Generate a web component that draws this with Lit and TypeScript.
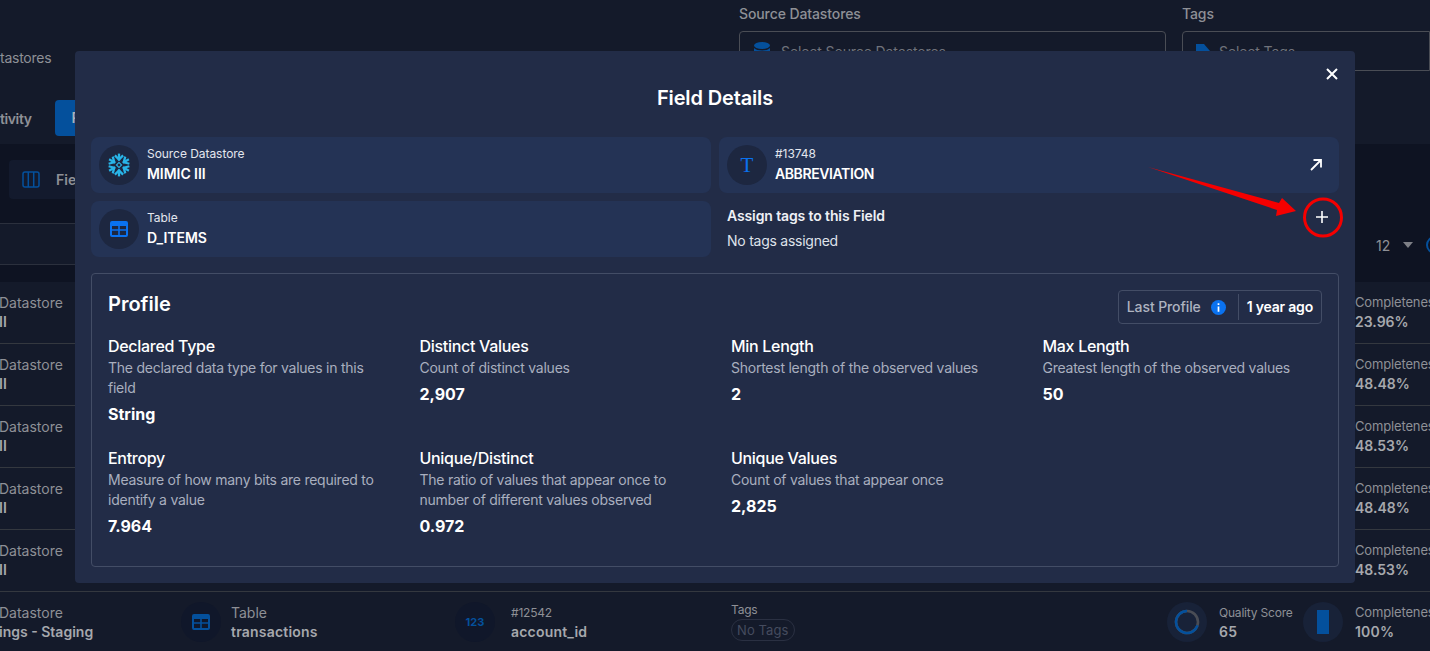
import { LitElement, html, css, svg } from "lit";
import { customElement } from "lit/decorators.js";

const STATS = [
  { label: "Declared Type", desc: "The declared data type for values in this field", value: "String" },
  { label: "Distinct Values", desc: "Count of distinct values", value: "2,907" },
  { label: "Min Length", desc: "Shortest length of the observed values", value: "2" },
  { label: "Max Length", desc: "Greatest length of the observed values", value: "50" },
  { label: "Entropy", desc: "Measure of how many bits are required to identify a value", value: "7.964" },
  { label: "Unique/Distinct", desc: "The ratio of values that appear once to number of different values observed", value: "0.972" },
  { label: "Unique Values", desc: "Count of values that appear once", value: "2,825" },
];

const ROWS = [
  { name: "II", pct: "23.96%" },
  { name: "II", pct: "48.48%" },
  { name: "II", pct: "48.53%" },
  { name: "II", pct: "48.48%" },
  { name: "II", pct: "48.53%" },
];

const tableIcon = html`<svg viewBox="0 0 18 16" width="18" height="16">
  <path fill="currentColor" fill-rule="evenodd" d="M2 0h14a2 2 0 0 1 2 2v12a2 2 0 0 1-2 2H2a2 2 0 0 1-2-2V2a2 2 0 0 1 2-2zM2 5v3.2h6.2V5zM9.8 5v3.2H16V5zM2 9.8V14h6.2V9.8zM9.8 9.8V14H16V9.8z" />
</svg>`;

const arm = (a: number) => svg`<g transform="rotate(${a} 12 12)">
  <path d="M12 0.6V7.4" />
  <path d="M7.9 2.4 12 6.5l4.1-4.1" />
</g>`;

const snowflake = html`<svg viewBox="0 0 24 24" width="24" height="24" fill="none" stroke="#29b5e8" stroke-width="2.3">
  ${[0, 60, 120, 180, 240, 300].map((a) => arm(a))}
  <rect x="10.2" y="10.2" width="3.6" height="3.6" transform="rotate(45 12 12)" stroke-width="1.1" />
</svg>`;

@customElement("app-root")
export class AppRoot extends LitElement {
  static styles = css`
    :host {
      display: block;
      position: relative;
      width: 1430px;
      height: 651px;
      overflow: hidden;
      background: #141a2a;
      font-family: Inter, "Liberation Sans", sans-serif;
      color: #fff;
    }

    /* page behind the dialog */
    .top {
      height: 144px;
      display: flex;
      flex-direction: column;
    }
    .filters {
      height: 100px;
      display: flex;
      color: #8e9096;
      font-size: 14px;
    }
    .crumb {
      width: 739px;
      padding-top: 49px;
      letter-spacing: -0.25px;
    }
    .filter {
      display: flex;
      flex-direction: column;
      gap: 9px;
      padding-top: 5px;
      font-weight: 500;
      letter-spacing: -0.1px;
    }
    .filter.source { width: 427px; margin-right: 16px; }
    .filter.tags { flex: 1; }
    .select {
      height: 40px;
      border: 1px solid #4a4d55;
      border-radius: 4px 0 0 0;
      display: flex;
      align-items: center;
      font-weight: 400;
      color: #6f727b;
      box-sizing: border-box;
    }
    .filter.source .select { border-radius: 4px; padding-left: 14px; gap: 11px; }
    .filter.tags .select { padding-left: 13px; gap: 9px; }
    .tabs {
      display: flex;
      align-items: center;
      height: 36px;
      font-size: 14px;
      font-weight: 600;
      color: #8e9096;
      letter-spacing: -0.4px;
    }
    .tab-active {
      margin-left: 23px;
      width: 60px;
      height: 36px;
      border-radius: 4px;
      background: #04509c;
      line-height: 36px;
      padding-left: 17px;
      box-sizing: border-box;
      color: #a9b0ba;
    }
    .tools {
      height: 138px;
      background: #0e1322;
      position: relative;
      display: flex;
      flex-direction: column;
    }
    .tool-row {
      height: 79px;
      padding: 16px 0 0 9px;
      box-sizing: border-box;
    }
    .fields {
      width: 120px;
      height: 39px;
      background: #131a2d;
      border-radius: 4px;
      display: flex;
      align-items: center;
      gap: 16px;
      padding-left: 13px;
      box-sizing: border-box;
      font-size: 14px;
      font-weight: 600;
      color: #8e9096;
    }
    .header-band {
      width: 200px;
      height: 42px;
      border-top: 1px solid #2b303d;
      border-bottom: 1px solid #2b303d;
      background: #141a2a;
      box-sizing: border-box;
    }
    .page-size {
      position: absolute;
      top: 84px;
      left: 1376px;
      display: flex;
      align-items: center;
      gap: 13px;
      height: 34px;
      font-size: 14px;
      color: #8e9096;
    }
    .caret {
      width: 0;
      height: 0;
      border-left: 5.5px solid transparent;
      border-right: 5.5px solid transparent;
      border-top: 6px solid #7d7f86;
    }
    .ring {
      width: 14px;
      height: 14px;
      flex: none;
      border: 2px solid #04509c;
      border-radius: 50%;
    }
    .row {
      height: 62px;
      padding-bottom: 2px;
      border-bottom: 1px solid #34383f;
      box-sizing: border-box;
      display: grid;
      grid-template-columns: 181px 274px 276px 436px 136px 1fr;
      align-items: center;
    }
    .row.last { height: 60px; padding-bottom: 0; border-bottom: 0; }
    .cell {
      display: flex;
      align-items: center;
      gap: 10px;
      min-width: 0;
    }
    .cell.wide { gap: 16px; }
    .cell.metric { gap: 12px; }
    .round {
      width: 40px;
      height: 40px;
      flex: none;
      border-radius: 50%;
      background: #10172a;
      color: #04509c;
      display: flex;
      align-items: center;
      justify-content: center;
      font-size: 11px;
      font-weight: 700;
    }
    .round.score { background: #182238; }
    .cap {
      font-size: 14px;
      line-height: 19px;
      color: #8e9096;
      white-space: nowrap;
    }
    .cap.sm { font-size: 12px; letter-spacing: -0.2px; }
    .cap.complete { font-size: 13px; letter-spacing: -0.15px; }
    .val {
      font-size: 14px;
      line-height: 19px;
      font-weight: 600;
      letter-spacing: 0.2px;
      color: #a6a8ad;
      white-space: nowrap;
    }
    .first { margin-left: -1px; }
    .first .val { letter-spacing: 0; }
    .pct { margin-left: 52px; }
    .pct .val { letter-spacing: 0; }
    .tag-cell { margin-top: -3px; }
    .no-tags {
      display: inline-block;
      padding: 0 5px;
      font-size: 13px;
      line-height: 20px;
      letter-spacing: 0.1px;
      color: #454b5e;
      border: 1px solid #2a3042;
      border-radius: 11px;
    }
    .bar {
      width: 12px;
      height: 24px;
      background: #04509c;
    }

    /* dialog */
    .modal {
      position: absolute;
      left: 75px;
      top: 51px;
      width: 1280px;
      height: 532px;
      box-sizing: border-box;
      padding: 0 16px;
      background: #222c47;
      border-radius: 4px;
    }
    .title {
      margin: 0;
      height: 86px;
      padding-top: 33px;
      box-sizing: border-box;
      font-size: 20px;
      line-height: 28px;
      font-weight: 600;
      letter-spacing: -0.15px;
      text-align: center;
    }
    .close {
      position: absolute;
      top: 16px;
      right: 16px;
      width: 14px;
      height: 14px;
    }
    .cards {
      display: grid;
      grid-template-columns: 620px 620px;
      grid-auto-rows: 56px;
      gap: 8px;
    }
    .card {
      display: flex;
      align-items: center;
      gap: 8px;
      padding: 0 8px;
      background: #243355;
      border-radius: 8px;
    }
    .badge {
      width: 40px;
      height: 40px;
      flex: none;
      border-radius: 50%;
      background: #1d2740;
      display: flex;
      align-items: center;
      justify-content: center;
      color: #0a72f0;
    }
    .serif {
      font-family: "Liberation Serif", serif;
      font-size: 21px;
    }
    .text { flex: 1; margin-top: -2px; }
    .small {
      font-size: 12px;
      line-height: 17px;
      color: #e3e6ee;
      letter-spacing: -0.05px;
    }
    .name {
      font-size: 14px;
      line-height: 20px;
      font-weight: 600;
      letter-spacing: -0.05px;
      margin-top: 2px;
    }
    .name.tight { letter-spacing: -0.4px; }
    .expand { margin-right: 8px; }
    .tags-block {
      padding: 5px 0 0 8px;
      position: relative;
    }
    .tags-title {
      font-size: 14px;
      line-height: 20px;
      font-weight: 600;
      letter-spacing: -0.12px;
      color: #eef0f5;
    }
    .tags-none {
      margin-top: 5px;
      font-size: 14px;
      line-height: 20px;
      letter-spacing: -0.25px;
      color: #dfe2ea;
    }
    .plus {
      position: absolute;
      right: 10px;
      top: 9px;
      width: 14px;
      height: 14px;
    }
    .profile {
      margin-top: 16px;
      height: 294px;
      box-sizing: border-box;
      border: 1px solid #434d66;
      border-radius: 4px;
      padding: 16px;
    }
    .profile-head {
      display: flex;
      justify-content: space-between;
      align-items: flex-start;
      height: 45px;
    }
    .profile-title {
      margin: 0;
      font-size: 20px;
      line-height: 28px;
      font-weight: 600;
    }
    .chip {
      display: flex;
      align-items: center;
      height: 34px;
      box-sizing: border-box;
      border: 1px solid #434d66;
      border-radius: 4px;
      font-size: 14px;
      font-weight: 500;
      line-height: 16px;
    }
    .chip-a {
      display: flex;
      align-items: center;
      gap: 10px;
      padding: 0 12px 0 8px;
      letter-spacing: -0.1px;
      color: #aeb3c0;
      border-right: 1px solid #434d66;
      height: 26px;
    }
    .chip-b {
      padding: 0 8px;
      font-weight: 600;
      letter-spacing: -0.2px;
    }
    .info {
      width: 15px;
      height: 15px;
    }
    .stats {
      display: grid;
      grid-template-columns: repeat(4, 1fr);
      grid-auto-rows: 112px;
      column-gap: 32px;
    }
    .stat-label {
      font-size: 16px;
      line-height: 22px;
      font-weight: 500;
      letter-spacing: -0.3px;
    }
    .stat-desc {
      margin-top: 1px;
      font-size: 14px;
      line-height: 20px;
      letter-spacing: -0.25px;
      color: #a9afbf;
    }
    .stat-value {
      margin-top: 5px;
      font-size: 16px;
      line-height: 22px;
      font-weight: 700;
    }

    /* red call-out drawn over the dialog */
    .callout {
      position: absolute;
      left: 0;
      top: 0;
      pointer-events: none;
    }
  `;

  render() {
    return html`
      <div class="top">
        <div class="filters">
          <div class="crumb">tastores</div>
          <div class="filter source">
            Source Datastores
            <div class="select">
              <svg width="16" height="18" viewBox="0 0 16 18" fill="#04509c">
                <ellipse cx="8" cy="3.5" rx="8" ry="3.5" />
                <path d="M0 6c1.500 1.700 4.500 2.500 8 2.500s6.500-.8 8-2.500v4c0 1.900-3.600 3.500-8 3.500S0 11.900 0 10z" />
              </svg>
              Select Source Datastores
            </div>
          </div>
          <div class="filter tags">
            Tags
            <div class="select">
              <svg width="14" height="14" viewBox="0 0 14 14" fill="#04509c">
                <path d="M0 0h8l6 7-6 7H0z" />
              </svg>
              Select Tags
            </div>
          </div>
        </div>
        <div class="tabs">tivity<span class="tab-active">P</span></div>
      </div>
      <div class="tools">
        <div class="tool-row">
          <div class="fields">
            <svg width="18" height="17" viewBox="0 0 18 17" fill="none" stroke="#04509c" stroke-width="1.5">
              <rect x="1" y="1" width="16" height="15" rx="2" />
              <path d="M6.300 1v15M11.700 1v15" />
            </svg>
            Fie
          </div>
        </div>
        <div class="header-band"></div>
        <div class="page-size">12<span class="caret"></span><span class="ring"></span></div>
      </div>
      ${ROWS.map(
        (r) => html`<div class="row">
          <div class="first">
            <div class="cap">Datastore</div>
            <div class="val">${r.name}</div>
          </div>
          <div></div><div></div><div></div><div></div>
          <div class="pct">
            <div class="cap complete">Completeness</div>
            <div class="val">${r.pct}</div>
          </div>
        </div>`
      )}
      <div class="row last">
        <div class="first">
          <div class="cap">Datastore</div>
          <div class="val">ings - Staging</div>
        </div>
        <div class="cell">
          <div class="round">${tableIcon}</div>
          <div>
            <div class="cap">Table</div>
            <div class="val">transactions</div>
          </div>
        </div>
        <div class="cell wide">
          <div class="round">123</div>
          <div>
            <div class="cap sm">#12542</div>
            <div class="val">account_id</div>
          </div>
        </div>
        <div class="tag-cell">
          <div class="cap sm">Tags</div>
          <span class="no-tags">No Tags</span>
        </div>
        <div class="cell metric">
          <div class="round score">
            <svg width="26" height="26" viewBox="0 0 26 26" fill="none" stroke-width="2.6">
              <circle cx="13" cy="13" r="11" stroke="#4a4d55" />
              <path d="M13 2A11 11 0 1 0 23.500 16.400" stroke="#04509c" />
            </svg>
          </div>
          <div>
            <div class="cap sm">Quality Score</div>
            <div class="val">65</div>
          </div>
        </div>
        <div class="cell metric">
          <div class="round score"><div class="bar"></div></div>
          <div>
            <div class="cap complete">Completeness</div>
            <div class="val">100%</div>
          </div>
        </div>
      </div>

      <div class="modal">
        <svg class="close" viewBox="0 0 14 14" fill="none" stroke="#fff" stroke-width="2">
          <path d="M2 2l10 10M12 2 2 12" />
        </svg>
        <h2 class="title">Field Details</h2>
        <div class="cards">
          <div class="card">
            <div class="badge">${snowflake}</div>
            <div class="text">
              <div class="small">Source Datastore</div>
              <div class="name">MIMIC III</div>
            </div>
          </div>
          <div class="card">
            <div class="badge"><span class="serif">T</span></div>
            <div class="text">
              <div class="small">#13748</div>
              <div class="name tight">ABBREVIATION</div>
            </div>
            <svg class="expand" width="14" height="14" viewBox="0 0 14 14" fill="none" stroke="#fff" stroke-width="1.8">
              <path d="M2 12 12 2M4.500 2H12v7.500" />
            </svg>
          </div>
          <div class="card">
            <div class="badge">${tableIcon}</div>
            <div class="text">
              <div class="small">Table</div>
              <div class="name">D_ITEMS</div>
            </div>
          </div>
          <div class="tags-block">
            <div class="tags-title">Assign tags to this Field</div>
            <div class="tags-none">No tags assigned</div>
            <svg class="plus" viewBox="0 0 14 14" fill="none" stroke="#fff" stroke-width="1.6">
              <path d="M7 1v12M1 7h12" />
            </svg>
          </div>
        </div>
        <section class="profile">
          <div class="profile-head">
            <h3 class="profile-title">Profile</h3>
            <div class="chip">
              <div class="chip-a">
                Last Profile
                <svg class="info" viewBox="0 0 14 14">
                  <circle cx="7" cy="7" r="7" fill="#0a72f0" />
                  <path d="M7 3v1.600M7 6v5" stroke="#fff" stroke-width="1.6" />
                </svg>
              </div>
              <div class="chip-b">1 year ago</div>
            </div>
          </div>
          <div class="stats">
            ${STATS.map(
              (s) => html`<div>
                <div class="stat-label">${s.label}</div>
                <div class="stat-desc">${s.desc}</div>
                <div class="stat-value">${s.value}</div>
              </div>`
            )}
          </div>
        </section>
      </div>

      <svg class="callout" width="1430" height="651" viewBox="0 0 1430 651">
        <polygon fill="#f50000" points="1148,167 1279,203 1282,198 1296,211 1276,216 1277,210" />
        <circle cx="1323" cy="217.500" r="18.500" fill="none" stroke="#f50000" stroke-width="3" />
      </svg>
    `;
  }
}
